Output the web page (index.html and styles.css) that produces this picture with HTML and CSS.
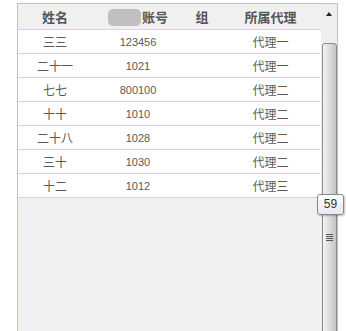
FILE: index.html
```html
<!DOCTYPE html>
<html>
<head>
  <title>代理成员</title>
  <link rel="stylesheet" href="styles.css">
</head>
<body>
  <div class="panel">
    <div class="grid">
      <table class="list">
        <thead>
          <tr>
            <th class="c-name">姓名</th>
            <th class="c-acct"><span class="mask"></span>账号</th>
            <th class="c-group">组</th>
            <th class="c-agent">所属代理</th>
          </tr>
        </thead>
        <tbody>
          <tr><td>三三</td><td class="num">123456</td><td></td><td>代理一</td></tr>
          <tr><td>二十一</td><td class="num">1021</td><td></td><td>代理一</td></tr>
          <tr><td>七七</td><td class="num">800100</td><td></td><td>代理二</td></tr>
          <tr><td>十十</td><td class="num">1010</td><td></td><td>代理二</td></tr>
          <tr><td>二十八</td><td class="num">1028</td><td></td><td>代理二</td></tr>
          <tr><td>三十</td><td class="num">1030</td><td></td><td>代理二</td></tr>
          <tr><td>十二</td><td class="num">1012</td><td></td><td>代理三</td></tr>
        </tbody>
      </table>
    </div>
    <div class="scroll">
      <div class="scroll-up"><span class="arrow"></span></div>
      <div class="thumb">
        <span class="grip"></span>
      </div>
    </div>
  </div>
  <div class="tip">59</div>
</body>
</html>
```

FILE: styles.css
```css
body {
  margin: 0;
  background: #fff;
  font-family: "Noto Sans CJK SC", "Liberation Sans", sans-serif;
  color: #5a5a5a;
}

.panel {
  display: flex;
  width: 319px;
  height: 340px;
  margin: 3px 0 0 17px;
  border: 1px solid #9ccdf0;
  border-bottom: none;
}

.grid {
  flex: 1;
  background: #f0f0f0;
}

.list {
  width: 100%;
  border-collapse: collapse;
  table-layout: fixed;
}

.list th {
  height: 25px;
  padding: 0;
  font-size: 13px;
  font-weight: bold;
  color: #555;
  text-align: center;
  border-bottom: 1px solid #b4e4e8;
}

.list td {
  height: 23px;
  padding: 0;
  font-size: 12px;
  text-align: center;
  background: #fff;
  border-bottom: 1px solid #b4e4e8;
}

.list td.num {
  font-family: "Liberation Sans", sans-serif;
  font-size: 11px;
}

.c-name { width: 74px; }
.c-acct { width: 92px; }
.c-group { width: 36px; }

/* 被遮住的账号前缀 */
.mask {
  display: inline-block;
  width: 33px;
  height: 17px;
  margin-right: 1px;
  vertical-align: -4px;
  background: #c0c0c0;
  border-radius: 5px;
}

/* 右侧滚动条 */
.scroll {
  width: 16px;
  display: flex;
  flex-direction: column;
  background: #eee;
}

.scroll-up {
  height: 39px;
  display: flex;
  justify-content: center;
  padding-top: 8px;
  box-sizing: border-box;
}

.arrow {
  width: 0;
  height: 0;
  border-left: 3px solid transparent;
  border-right: 3px solid transparent;
  border-bottom: 4px solid #222;
}

.thumb {
  flex: 1;
  margin-left: 1px;
  border: 1px solid #8a8a8a;
  border-radius: 3px 3px 0 0;
  background: linear-gradient(to right, #f4f4f4, #dcdcdc 50%, #c4c4c4);
  position: relative;
}

.grip {
  position: absolute;
  left: 3px;
  top: 190px;
  width: 7px;
  height: 1px;
  background: #555;
  box-shadow: 0 2px 0 #555, 0 4px 0 #555, 0 6px 0 #555;
}

.tip {
  position: absolute;
  left: 317px;
  top: 194px;
  width: 25px;
  height: 19px;
  line-height: 19px;
  text-align: center;
  font-family: "Liberation Sans", sans-serif;
  font-size: 12px;
  color: #333;
  background: linear-gradient(#fff, #e6e9f0);
  border: 1px solid #888;
  border-radius: 3px;
  box-shadow: 1px 1px 2px rgba(0, 0, 0, 0.25);
}
```
